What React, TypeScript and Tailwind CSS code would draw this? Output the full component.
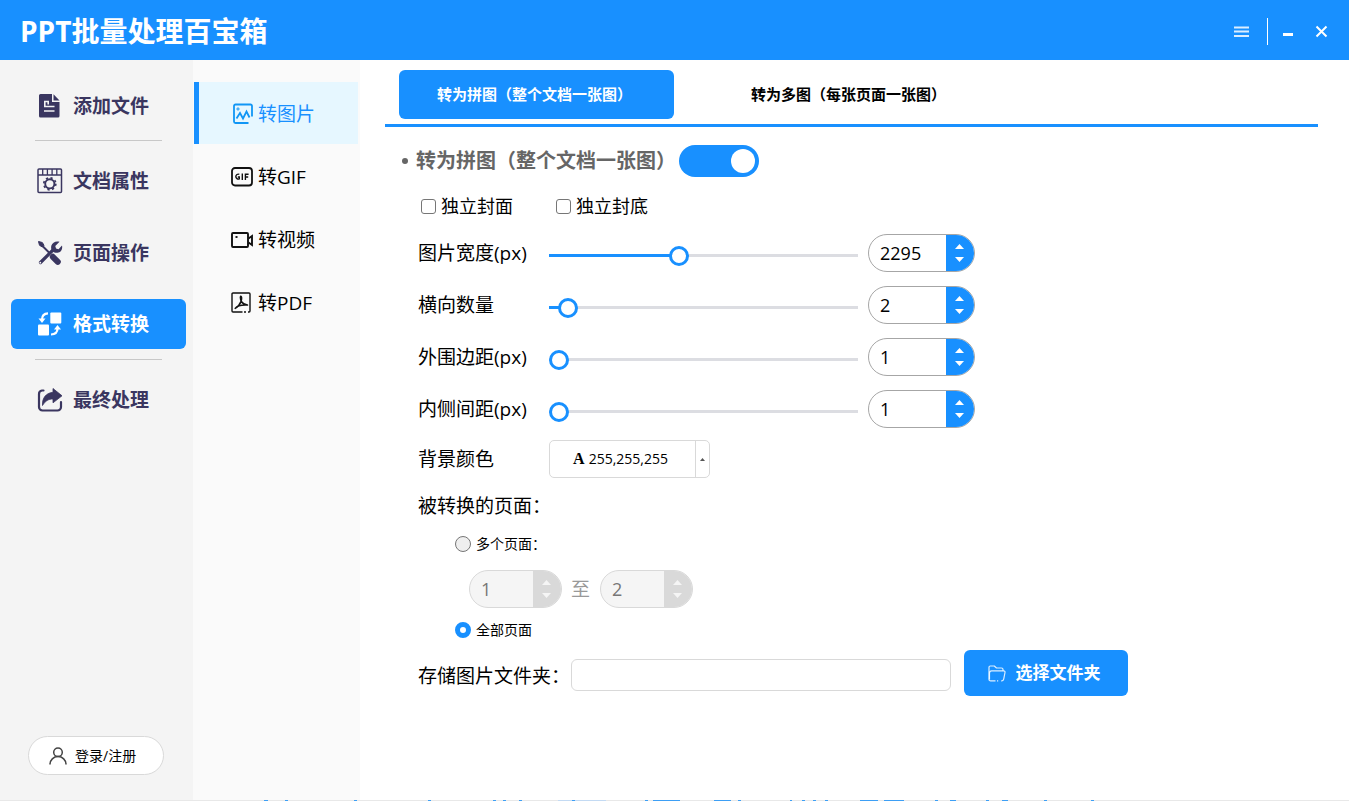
import { useState } from 'react';
import type { ReactNode } from 'react';

function FileIcon() {
  return (
    <svg width="24" height="26" viewBox="0 0 24 26" aria-hidden="true">
      <path d="M2.500 1H14v8h7.500v14a1.500 1.500 0 0 1-1.500 1.500H2.500A1.500 1.500 0 0 1 1 23V2.500A1.500 1.500 0 0 1 2.500 1z" fill="#3a3660" />
      <path d="M15.500 1.200 21.500 7.500h-6z" fill="#3a3660" />
      <path d="M6.800 13.500v-5h3.400v3M6 13.500h10.500M6 18h10.500" fill="none" stroke="#f4f4f4" strokeWidth="1.600" />
    </svg>
  );
}

function PropertyIcon() {
  return (
    <svg width="26" height="26" viewBox="0 0 26 26" fill="none" stroke="#3a3660" aria-hidden="true">
      <rect x="1" y="1" width="23.500" height="23.500" rx="1" strokeWidth="1.500" />
      <path d="M1 7h23.500M5.700 1v6M10.400 1v6M15.100 1v6M19.800 1v6" strokeWidth="1.300" />
      <circle cx="12.800" cy="15.800" r="4.600" strokeWidth="1.900" />
      <circle cx="12.800" cy="15.800" r="6" strokeWidth="1.700" strokeDasharray="2.200 2.512" />
    </svg>
  );
}

function ToolsIcon() {
  return (
    <svg width="26" height="26" viewBox="0 0 26 26" fill="none" stroke="#3a3660" aria-hidden="true">
      <path d="m3.500 4 9 9" strokeWidth="2" />
      <path d="m1.500 1.500 3.800 1 1.700 2.800-1.700 1.700-2.800-1.700z" fill="#3a3660" strokeWidth="1" strokeLinejoin="round" />
      <path d="m15.800 16.800 5 5" strokeWidth="6" strokeLinecap="round" />
      <path d="M3.500 22.500 17 9" strokeWidth="3.200" strokeLinecap="round" />
      <circle cx="3.300" cy="22.700" r="0.900" fill="#f4f4f4" stroke="none" />
      <path d="M22.500 1.800 18.300 6l.7 2.500 2.500.7L25 5.400c.8 3.200-.8 6.400-3.600 7.200-2.200.6-4.300.1-5.700-1.300-1.500-1.500-2-3.800-1.300-5.900C15.300 2.600 18.800.6 22.500 1.800z" fill="#3a3660" stroke="none" />
    </svg>
  );
}

function ConvertIcon() {
  return (
    <svg width="26" height="26" viewBox="0 0 26 26" aria-hidden="true">
      <rect x="13.300" y="1.500" width="11" height="11" rx="1" fill="#fff" />
      <rect x="1" y="13.500" width="11" height="11" rx="1" fill="#fff" />
      <path d="M11 2.300C7 2.500 5 4.500 5 8.500" fill="none" stroke="#fff" strokeWidth="2.200" />
      <path d="M1.500 7.500h7L5 12z" fill="#fff" />
      <path d="M14 23.500c4-.2 6.500-2.200 6.500-6" fill="none" stroke="#fff" strokeWidth="2.200" />
      <path d="M17 18.500h7L20.500 14z" fill="#fff" />
    </svg>
  );
}

function ShareIcon() {
  return (
    <svg width="26" height="26" viewBox="0 0 26 26" aria-hidden="true">
      <path d="M6.500 3.500H5A3.500 3.500 0 0 0 2 7v13a3.500 3.500 0 0 0 3.500 3.500h15A3.500 3.500 0 0 0 24 20v-5" fill="none" stroke="#3a3660" strokeWidth="2.200" strokeLinecap="round" />
      <path d="M16 1.500 25 8.800 16 15.800V12c-4.500 0-7.500 1.700-10.500 6.500C5 11 9 6 16 5.300z" fill="#3a3660" stroke="#3a3660" strokeWidth=".8" strokeLinejoin="round" />
    </svg>
  );
}

function PictureIcon() {
  return (
    <svg width="22" height="22" viewBox="0 0 22 22" fill="none" stroke="#1096f5" strokeWidth="1.800" aria-hidden="true">
      <path d="M21 13.500V3A1.500 1.500 0 0 0 19.500 1.500h-15A1.500 1.500 0 0 0 3 3v15.500A1.500 1.500 0 0 0 4.500 20H17.500" />
      <path d="M5.500 15.500 9 10l3 5.500L15.500 8.500l3 6" />
      <circle cx="7" cy="6" r="1.100" strokeWidth="1" />
    </svg>
  );
}

function GifIcon() {
  return (
    <svg width="22" height="22" viewBox="0 0 22 22" fill="none" stroke="#111" aria-hidden="true">
      <rect x="1" y="2" width="20" height="17.500" rx="3" strokeWidth="1.800" />
      <path d="M8.300 8.300a2.500 2.500 0 1 0 0 4.600v-1.900H6.800M11.300 7.500v6.500M14.400 14V8.200h3.200M14.400 11h2.800" strokeWidth="1.400" />
    </svg>
  );
}

function VideoIcon() {
  return (
    <svg width="22" height="22" viewBox="0 0 22 22" fill="none" stroke="#111" strokeWidth="1.900" aria-hidden="true">
      <rect x="1" y="4" width="16" height="14" rx="1" />
      <path d="m17.500 9.500 3.500-2.500v9l-3.500-2.500" />
      <path d="M4.500 8h2" />
    </svg>
  );
}

function PdfIcon() {
  return (
    <svg width="22" height="22" viewBox="0 0 22 22" fill="none" stroke="#111" strokeWidth="1.400" aria-hidden="true">
      <path d="M11.500 20H2a1 1 0 0 1-1-1V2a1 1 0 0 1 1-1h16a1 1 0 0 1 1 1v17a1 1 0 0 1-1 1h-1M13 20h2" />
      <path d="M9.700 4.200c-1.200.8.3 3.500.4 5.200-1 2.500-2.800 5.300-5.900 7 1.500-2 5.500-3.700 12.300-3.300-2.500-.2-4.800-1.700-6.400-3.900.5-1.600.7-4.400-.4-5z" strokeWidth="1.500" strokeLinejoin="round" />
    </svg>
  );
}

function Triangle({ down = false, small = false }: { down?: boolean; small?: boolean }) {
  return (
    <svg width={small ? 5 : 9} height={small ? 3 : 5} viewBox="0 0 8 4" preserveAspectRatio="none" fill="currentColor" aria-hidden="true">
      <path d={down ? 'M0 0h8L4 4z' : 'M0 4h8L4 0z'} />
    </svg>
  );
}

type StepperProps = {
  id: string;
  label?: string;
  value: number;
  onChange: (value: number) => void;
  disabled?: boolean;
};

function Stepper({ id, label, value, onChange, disabled = false }: StepperProps) {
  return (
    <div
      className={
        disabled
          ? 'flex h-[38px] w-[93px] shrink-0 overflow-hidden rounded-full border border-[#d9d9d9] bg-[#f5f5f5] text-[#777]'
          : 'flex h-[38px] w-[107px] shrink-0 overflow-hidden rounded-full border border-[#a6a6a6] bg-white text-black'
      }
    >
      <input
        id={id}
        type="number"
        aria-label={label}
        value={value}
        disabled={disabled}
        onChange={(e) => onChange(Number(e.target.value))}
        className="w-0 min-w-0 flex-1 [appearance:textfield] bg-transparent pl-[11px] text-lg outline-none [&::-webkit-inner-spin-button]:appearance-none"
      />
      <div className={disabled ? 'flex w-7 flex-col bg-[#d9d9d9] text-[#f5f5f5]' : 'flex w-7 flex-col bg-[#1890ff] text-white'}>
        <button type="button" disabled={disabled} aria-label="增加" onClick={() => onChange(value + 1)} className="flex flex-1 items-end justify-center pr-0.5 pb-1">
          <Triangle />
        </button>
        <button type="button" disabled={disabled} aria-label="减少" onClick={() => onChange(value - 1)} className="flex flex-1 items-start justify-center pt-1 pr-0.5">
          <Triangle down />
        </button>
      </div>
    </div>
  );
}

type SliderRowProps = { id: string; label: string; initial: number; min: number; max: number };

function SliderRow({ id, label, initial, min, max }: SliderRowProps) {
  const [value, setValue] = useState(initial);
  const fill = ((value - min) / (max - min)) * 100;
  return (
    <div className="flex items-center">
      <label htmlFor={id} className="w-[131px] shrink-0 text-[19px] leading-7">
        {label}
      </label>
      <input
        type="range"
        aria-label={label}
        min={min}
        max={max}
        value={value}
        onChange={(e) => setValue(Number(e.target.value))}
        style={{ backgroundImage: `linear-gradient(to right, #1890ff ${fill}%, #dcdde2 ${fill}%)` }}
        className="mt-1 mr-2.5 h-[3px] w-[309px] cursor-pointer appearance-none outline-none [&::-webkit-slider-thumb]:mt-0.5 [&::-webkit-slider-thumb]:size-5 [&::-webkit-slider-thumb]:appearance-none [&::-webkit-slider-thumb]:rounded-full [&::-webkit-slider-thumb]:border-3 [&::-webkit-slider-thumb]:border-[#1890ff] [&::-webkit-slider-thumb]:bg-white"
      />
      <Stepper id={id} value={value} onChange={setValue} />
    </div>
  );
}

function NavItem({ icon, label, active = false }: { icon: ReactNode; label: string; active?: boolean }) {
  return (
    <button
      type="button"
      className={
        active
          ? 'flex h-[50px] w-full items-center gap-2.5 rounded-md bg-[#1890ff] pl-[26px] text-[19px] font-bold text-white'
          : 'flex h-[50px] w-full items-center gap-2.5 rounded-md pt-0.5 pl-[26px] text-[19px] font-bold text-[#3a3660]'
      }
    >
      <span className="flex w-[26px] justify-center">{icon}</span>
      {label}
    </button>
  );
}

function FormatItem({ icon, label, active = false }: { icon: ReactNode; label: string; active?: boolean }) {
  return (
    <button
      type="button"
      className={
        active
          ? 'flex h-[62px] items-center gap-[5px] border-l-5 border-[#1890ff] bg-[#e6f7ff] pt-0.5 pl-8 text-[19px] text-[#1890ff]'
          : 'flex h-[62px] items-center gap-[5px] border-l-5 border-transparent pt-0.5 pl-8 text-[19px] text-black'
      }
    >
      {icon}
      {label}
    </button>
  );
}

const radioClass =
  'size-4 appearance-none rounded-full border border-[#767676] bg-[#efefef] checked:border-5 checked:border-[#1890ff] checked:bg-white';

const marks: [number, number][] = [
  [264, 4], [285, 3], [354, 3], [428, 3], [493, 3], [503, 3], [519, 3], [572, 3], [645, 3], [653, 27],
  [714, 17], [738, 3], [790, 2], [802, 3], [813, 3], [825, 3], [860, 18], [884, 20], [935, 3], [950, 6],
  [986, 3], [1002, 6], [1044, 3], [1091, 3],
];

export default function App() {
  const [enabled, setEnabled] = useState(true);
  const [range, setRange] = useState('all');
  const [from, setFrom] = useState(1);
  const [to, setTo] = useState(2);

  return (
    <div className="flex min-h-screen flex-col bg-white font-['Open_Sans','Noto_Sans_CJK_SC',sans-serif] text-black">
      <header className="flex h-[60px] items-center justify-between bg-[#1890ff] px-5 pt-0.5 text-white">
        <h1 className="text-[28px] leading-10 font-bold">PPT批量处理百宝箱</h1>
        <div className="flex items-center">
          <button type="button" aria-label="菜单" className="flex h-7 w-[26px] items-center">
            <svg width="15" height="13" viewBox="0 0 15 13" stroke="#fff" strokeOpacity=".85" strokeWidth="2" aria-hidden="true">
              <path d="M0 2.500h15M0 6.500h15M0 11h15" />
            </svg>
          </button>
          <span className="mr-[15px] ml-[7px] h-[27px] w-px bg-white" />
          <button type="button" aria-label="最小化" className="flex h-7 w-8 items-center">
            <svg width="11" height="11" viewBox="0 0 11 11" aria-hidden="true">
              <path d="M0 7h10v3H0z" fill="#fff" />
            </svg>
          </button>
          <button type="button" aria-label="关闭" className="flex h-7 w-3.5 items-center">
            <svg width="13" height="13" viewBox="0 0 13 13" stroke="#fff" strokeWidth="2" aria-hidden="true">
              <path d="m1.500 1.500 10 10M11.500 1.500l-10 10" />
            </svg>
          </button>
        </div>
      </header>

      <div className="flex flex-1">
        <aside className="flex w-[193px] shrink-0 flex-col bg-[#f4f4f4] pt-5 pb-[25px]">
          <nav className="flex flex-col pr-[7px] pl-[11px]">
            <NavItem icon={<FileIcon />} label="添加文件" />
            <hr className="mx-6 mt-2.5 mb-3.5 border-[#c8c8c8]" />
            <div className="flex flex-col gap-[22px]">
              <NavItem icon={<PropertyIcon />} label="文档属性" />
              <NavItem icon={<ToolsIcon />} label="页面操作" />
              <NavItem icon={<ConvertIcon />} label="格式转换" active />
            </div>
            <hr className="mx-6 mt-2.5 mb-3.5 border-[#c8c8c8]" />
            <NavItem icon={<ShareIcon />} label="最终处理" />
          </nav>
          <button type="button" className="mt-auto ml-7 flex h-[39px] w-[136px] items-center gap-2 rounded-full border border-[#d9d9d9] bg-white pl-5 text-sm">
            <svg width="18" height="18" viewBox="0 0 18 18" fill="none" stroke="#444" strokeWidth="1.500" aria-hidden="true">
              <circle cx="9" cy="5.300" r="4.300" />
              <path d="M1 17.500c0-4.500 3.500-7.900 8-7.900s8 3.400 8 7.900" />
            </svg>
            登录/注册
          </button>
        </aside>

        <nav className="flex w-[167px] shrink-0 flex-col gap-px bg-[#fafafa] pt-[22px] pr-0.5 pl-px">
          <FormatItem icon={<PictureIcon />} label="转图片" active />
          <FormatItem icon={<GifIcon />} label="转GIF" />
          <FormatItem icon={<VideoIcon />} label="转视频" />
          <FormatItem icon={<PdfIcon />} label="转PDF" />
        </nav>

        <main className="min-w-0 flex-1 pt-2.5 pr-[31px] pl-[25px]">
          <div className="flex gap-8 border-b-3 border-[#1890ff] pb-[5px] pl-3.5 text-[15px] font-bold">
            <button type="button" className="h-[49px] w-[275px] rounded-md bg-[#1890ff] pr-1 text-white">
              转为拼图（整个文档一张图）
            </button>
            <button type="button" className="h-[49px] w-[275px] pl-2.5">
              转为多图（每张页面一张图）
            </button>
          </div>

          <form className="pl-[33px]" onSubmit={(e) => e.preventDefault()}>
            <div className="-ml-4 flex items-center pt-[18px]">
              <span className="size-[6px] rounded-full bg-[#666]" />
              <h2 className="ml-2 text-[20px] leading-8 font-bold text-[#666]">转为拼图（整个文档一张图）</h2>
              <button
                type="button"
                role="switch"
                aria-checked={enabled}
                aria-label="转为拼图"
                onClick={() => setEnabled(!enabled)}
                className={
                  enabled
                    ? 'ml-[3px] flex h-8 w-20 items-center justify-end rounded-full bg-[#1890ff] p-1'
                    : 'ml-[3px] flex h-8 w-20 items-center justify-start rounded-full bg-[#bfbfbf] p-1'
                }
              >
                <span className="size-6 rounded-full bg-white" />
              </button>
            </div>

            <div className="flex gap-[43px] pt-[15px] pl-[3px] text-lg leading-7">
              <label className="flex items-center gap-[5px]">
                <input type="checkbox" className="size-[15px] appearance-none rounded-[3px] border border-[#767676] bg-white checked:bg-[#1890ff]" />
                独立封面
              </label>
              <label className="flex items-center gap-[5px]">
                <input type="checkbox" className="size-[15px] appearance-none rounded-[3px] border border-[#767676] bg-white checked:bg-[#1890ff]" />
                独立封底
              </label>
            </div>

            <div className="flex flex-col gap-3.5 pt-3.5">
              <SliderRow id="width" label="图片宽度(px)" initial={2295} min={1} max={5530} />
              <SliderRow id="columns" label="横向数量" initial={2} min={1} max={33} />
              <SliderRow id="outer" label="外围边距(px)" initial={1} min={1} max={100} />
              <SliderRow id="inner" label="内侧间距(px)" initial={1} min={1} max={100} />
            </div>

            <div className="flex items-center pt-3">
              <label htmlFor="background" className="w-[131px] text-[19px] leading-7">
                背景颜色
              </label>
              <button id="background" type="button" aria-haspopup="dialog" className="flex h-[38px] w-[161px] rounded-[5px] border border-[#d9d9d9] text-sm">
                <span className="flex flex-1 items-center justify-center gap-1 self-center pr-1">
                  <span className="font-['Liberation_Serif',serif] text-base leading-5 font-bold">A</span>
                  255,255,255
                </span>
                <span className="flex w-3.5 items-center justify-center self-stretch border-l border-[#d9d9d9] text-[#555]">
                  <Triangle small />
                </span>
              </button>
            </div>

            <fieldset className="pt-3.5">
              <legend className="float-left w-full text-[19px] leading-7">被转换的页面：</legend>
              <div className="clear-both flex flex-col pt-3 pl-[37px] text-sm">
                <label className="flex items-center gap-[5px] self-start leading-6">
                  <input type="radio" name="pages" checked={range === 'some'} onChange={() => setRange('some')} className={radioClass} />
                  多个页面：
                </label>
                <div className="flex items-center gap-[9px] py-3.5 pl-3.5">
                  <Stepper id="from" label="起始页" value={from} onChange={setFrom} disabled={range === 'all'} />
                  <span className="w-5 text-[19px] leading-7 text-[#999]">至</span>
                  <Stepper id="to" label="结束页" value={to} onChange={setTo} disabled={range === 'all'} />
                </div>
                <label className="flex items-center gap-[5px] self-start leading-4">
                  <input type="radio" name="pages" checked={range === 'all'} onChange={() => setRange('all')} className={radioClass} />
                  全部页面
                </label>
              </div>
            </fieldset>

            <div className="flex items-center pt-3">
              <label htmlFor="folder" className="w-[153px] pt-1.5 text-[19px] leading-7">
                存储图片文件夹：
              </label>
              <input id="folder" type="text" className="mt-1 mr-[13px] h-8 w-[380px] rounded-md border border-[#d9d9d9] px-2 text-sm outline-none" />
              <button type="button" className="flex h-[46px] w-[164px] items-center justify-center gap-2.5 rounded-md bg-[#1890ff] pr-1 text-[17px] font-bold text-white">
                <svg width="18" height="17" viewBox="0 0 18 17" fill="none" stroke="#fff" strokeOpacity=".85" strokeWidth="1.200" strokeLinejoin="round" aria-hidden="true">
                  <path d="M7.500 15.800H2.600c-1 0-1.600-.6-1.600-1.600V2.300C1 1.500 1.500 1 2.300 1h4l2.200 2h5c.9 0 1.500.6 1.500 1.500v1.200" />
                  <path d="M1.500 14.500V8c0-1.300.7-2.100 2-2.100h12.200c1 0 1.500.6 1.300 1.600l-1.300 6.700c-.2 1-.8 1.600-1.700 1.600h-.8M9 15.800h1.200" />
                </svg>
                选择文件夹
              </button>
            </div>
          </form>
        </main>
      </div>

      <footer className="h-px overflow-hidden bg-[#e8e8e8]">
        <svg width="1349" height="1" viewBox="0 0 1349 1" className="block" aria-hidden="true">
          <rect x="558" y="0" width="48" height="1" fill="#c3daf3" />
          {marks.map(([x, width]) => (
            <rect key={x} x={x} y="0" width={width} height="1" fill="#3d9ff5" />
          ))}
        </svg>
      </footer>
    </div>
  );
}
